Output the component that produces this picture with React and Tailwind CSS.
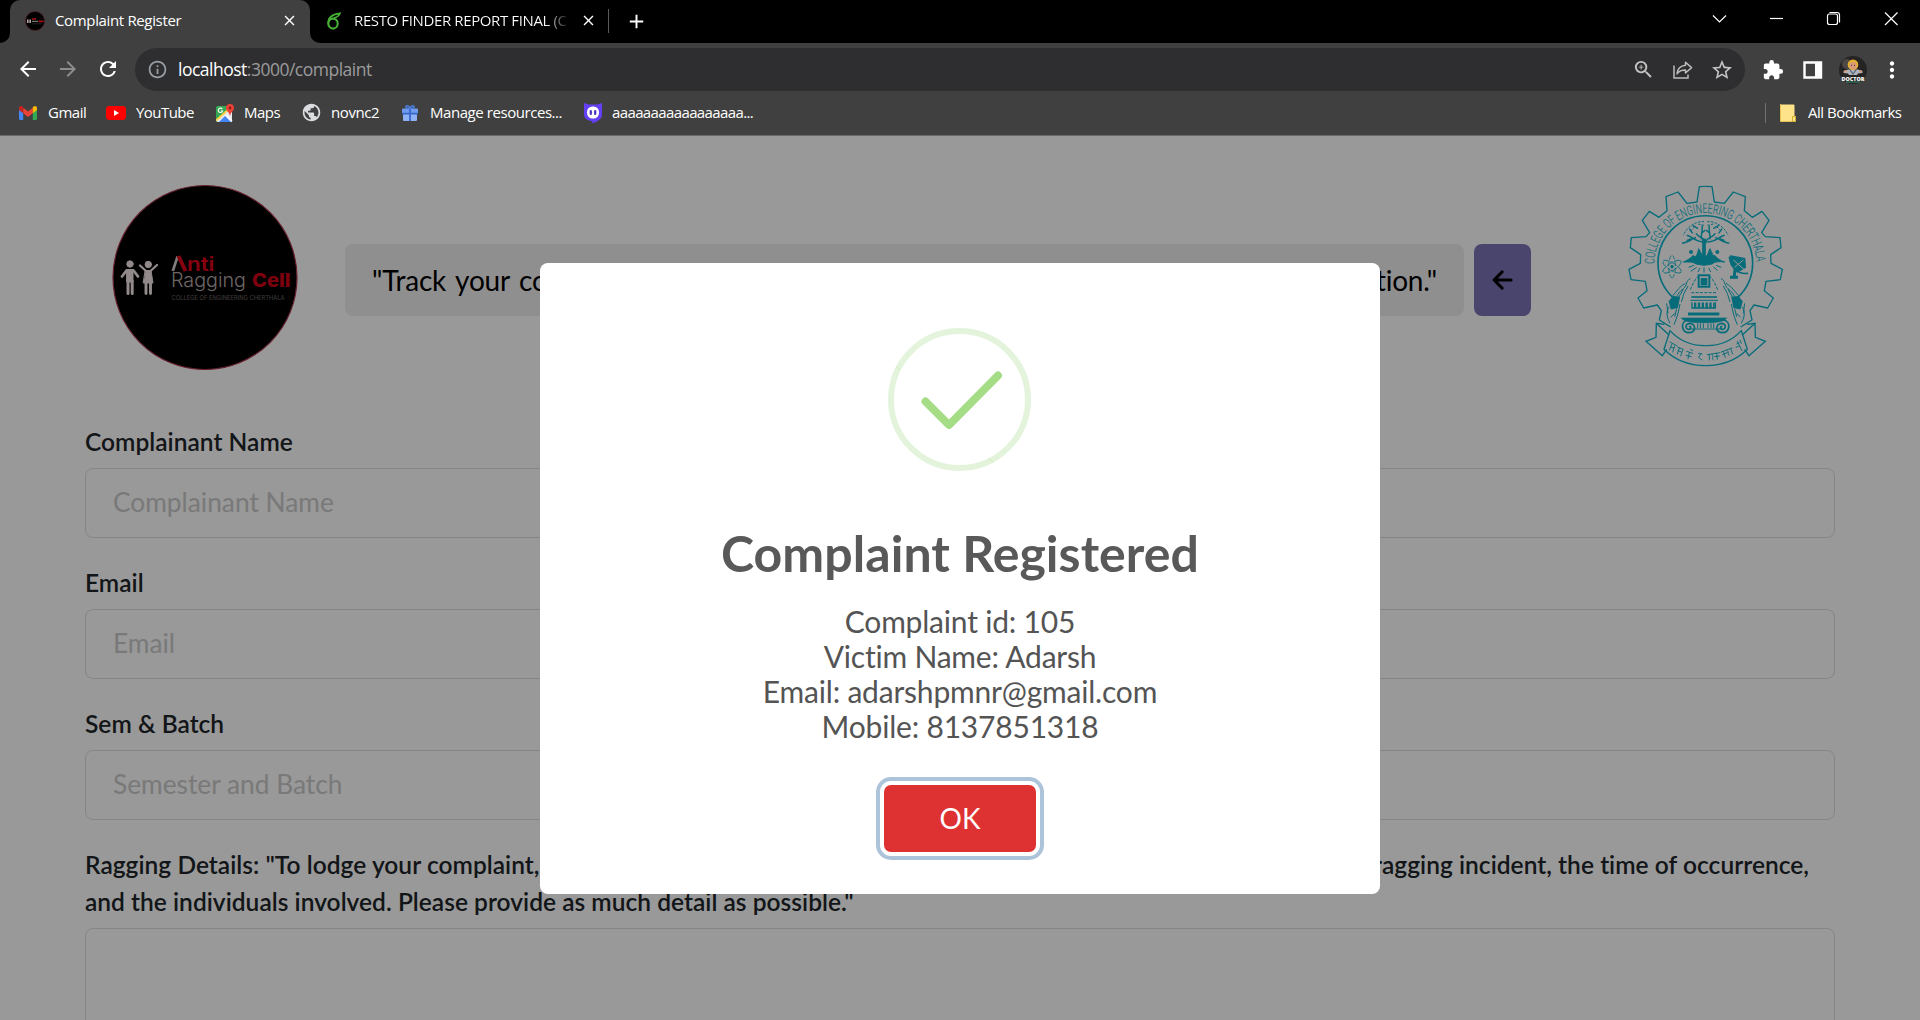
import React from "react";
import {
  MdArrowBack, MdArrowForward, MdRefresh, MdInfoOutline, MdZoomIn, MdStarBorder,
  MdExtension, MdMoreVert, MdPublic, MdClose, MdAdd,
} from "react-icons/md";

/* ---------- browser chrome icons ---------- */

const MiniLogo = () => (
  <svg className="size-5 shrink-0" viewBox="0 0 20 20">
    <circle cx="10" cy="10" r="9.6" fill="#000" stroke="#5a2028" strokeWidth=".7" />
    <path d="M2 8.5h1.6v3.4H2zM4.4 8.5H6v3.4H4.4z" fill="#b5a5a5" />
    <path d="M7 8h4" stroke="#b3121f" strokeWidth="1.4" />
    <path d="M7 10.4h6" stroke="#777" strokeWidth="1.2" />
    <path d="M13.5 10.4h5" stroke="#b3121f" strokeWidth="1.6" />
    <path d="M7 12.8h10" stroke="#333" strokeWidth=".7" />
  </svg>
);

const Overleaf = () => (
  <svg className="w-4 h-[18px] shrink-0" viewBox="0 0 16 18" fill="none" stroke="#46b035" strokeWidth="2.100">
    <ellipse cx="7" cy="11.600" rx="4.700" ry="5" />
    <path d="M2.300 11.500C2 7 4.500 2.500 14 1.300 13 4.300 11 5.300 7.500 6.300" strokeWidth="1.700" />
  </svg>
);

const Gmail = () => (
  <svg className="w-[18px] h-[14px] shrink-0" viewBox="0 0 18 14">
    <path d="M0 2.200V12.700Q0 14 1.300 14H4.200V5.500z" fill="#4285f4" />
    <path d="M18 2.200V12.700Q18 14 16.700 14H13.800V5.500z" fill="#34a853" />
    <path d="M4.200 1.800 9 5.500 13.800 1.800V7.200L9 10.900 4.200 7.200z" fill="#ea4335" />
    <path d="M0 2.200C0 .2 2.100-.6 3.600.8L4.200 1.400V7.200L0 4z" fill="#c5221f" />
    <path d="M18 2.200C18 .2 15.900-.6 14.400.8L13.800 1.400V7.200L18 4z" fill="#fbbc04" />
  </svg>
);

const YouTube = () => (
  <svg className="w-5 h-[14px] shrink-0" viewBox="0 0 20 14">
    <rect width="20" height="14" rx="3.400" fill="#f00" />
    <path d="M8 4v6l5-3z" fill="#fff" />
  </svg>
);

const Maps = () => (
  <svg className="w-[18px] h-[18px] shrink-0" viewBox="0 0 18 18">
    <rect y="2" width="16" height="16" rx="1.500" fill="#34a853" />
    <path d="M0 16.500 14 4l2 2v12H1.500z" fill="#e8eaed" />
    <path d="M3 18 9 12 15 18z" fill="#4285f4" />
    <path d="M0 16.500 14.500 3.500" stroke="#fbd14b" strokeWidth="2" />
    <path d="M10 11 16 17" stroke="#fff" strokeWidth="1.500" />
    <path d="M6.300 5.100A2.200 2.200 0 1 0 6.600 7H4.800" fill="none" stroke="#fff" strokeWidth="1.100" />
    <path d="M14 0a4 4 0 0 1 4 4c0 2.800-3.100 3.800-4 8-.9-4.200-4-5.200-4-8a4 4 0 0 1 4-4z" fill="#ea4335" />
    <circle cx="14" cy="4" r="1.400" fill="#8c1d18" />
  </svg>
);

const Gift = () => (
  <svg className="w-4 h-4 shrink-0" viewBox="0 0 16 16">
    <rect x="0" y="3.500" width="16" height="5" rx="1" fill="#6f9cf0" />
    <rect x="1" y="9" width="14" height="7" rx="1" fill="#8fb2f5" />
    <path d="M8 3.500V16M0 8.700H16" stroke="#3867c8" strokeWidth="1.800" />
    <path d="M8 3.700C6 3.700 3.600 3 4 1.500 4.600-.2 7.400 1 8 3.700 8.600 1 11.400-.2 12 1.500 12.400 3 10 3.700 8 3.700z" fill="none" stroke="#4d7fe0" strokeWidth="1.500" />
  </svg>
);

const PurpleMask = () => (
  <svg className="w-[18px] h-5 shrink-0" viewBox="0 0 18 20">
    <path d="M0 0 5 1.500H13L18 0V12C18 15 16 16 13.500 18 12 19.300 11 20 7.500 20L8.500 18.300C4 17.500 0 15.500 0 12z" fill="#6440f5" />
    <rect x="3" y="3.500" width="12" height="12" rx="5.500" fill="#fff" />
    <rect x="5.700" y="7" width="2.200" height="5" rx="1.100" fill="#4a2fc0" />
    <rect x="10.100" y="7" width="2.200" height="5" rx="1.100" fill="#4a2fc0" />
  </svg>
);

const Folder = () => (
  <svg className="w-4 h-[18px] shrink-0" viewBox="0 0 16 18">
    <path d="M.5.500H13.500Q14.500.500 14.500 1.500V12H16V17.500H.5z" fill="#ffe38b" />
    <path d="M12.500 17.500V12.500H15.500V17.500z" fill="#ffe38b" stroke="#d9b02c" />
    <path d="M.5 0V17.500H12" fill="none" stroke="#e7c34d" />
  </svg>
);

const ShareIcon = () => (
  <svg className="w-5 h-[18px] shrink-0" viewBox="0 0 20 18" fill="none" stroke="#bdbdbd" strokeWidth="1.500">
    <path d="M1 4.500V17H15V13.500" />
    <path d="M12.500 1.200 18.600 6.600 12.500 12V9C8.500 9 6 10 4 12.800 4.500 8 7.500 4.800 12.500 4.300z" strokeLinejoin="round" />
  </svg>
);

const SidePanel = () => (
  <svg className="w-5 h-[18px] shrink-0" viewBox="0 0 20 18">
    <path d="M1.500 1.500H18V16.500H1.500z" fill="none" stroke="#fff" strokeWidth="2.400" />
    <path d="M12 1H18V17H12z" fill="#fff" />
  </svg>
);

const Avatar = () => (
  <svg className="size-7 shrink-0" viewBox="0 0 28 28">
    <circle cx="14" cy="14" r="14" fill="#262423" />
    <circle cx="8" cy="8" r="5" fill="#4d4845" />
    <path d="M4.500 15 9 13.500H19L23.500 15V17L19 17.500 18 19H10L9 17.500 4.500 17z" fill="#aeb4bd" />
    <path d="M11 14 14 18 17 14" fill="none" stroke="#596273" strokeWidth="1.200" />
    <path d="M5 15.500H8M20 15.500H23" stroke="#d89a78" strokeWidth="2" />
    <circle cx="14" cy="8.800" r="5.300" fill="#e5b32d" />
    <circle cx="14" cy="9.800" r="3.700" fill="#d89a78" />
    <path d="M12 9.300h1M15 9.300h1" stroke="#333" />
    <text x="14" y="24.500" textAnchor="middle" fontSize="5.400" fontWeight="800" fontFamily="Open Sans, sans-serif" fill="#fff">DOCTOR</text>
    <path d="M7 26H21" stroke="#3fae86" strokeWidth=".8" />
  </svg>
);

const Bookmark = ({ icon, iconW, width, label, tracking }) => (
  <div className={`flex items-center ${width}`}>
    <div className={`${iconW} shrink-0 flex`}>{icon}</div>
    <span className={`whitespace-nowrap ${tracking}`}>{label}</span>
  </div>
);

function TabStrip() {
  return (
    <div className="h-[43px] bg-black flex items-stretch">
      <div className="w-[10px] bg-[#404040]"><div className="size-full bg-black rounded-br-[10px]" /></div>
      <div className="w-[300px] bg-[#404040] rounded-t-[10px] flex items-center pl-[15px] pr-[12px] pb-[2px]">
        <MiniLogo />
        <span className="ml-[10px] flex-1 whitespace-nowrap tracking-[-0.35px]">Complaint Register</span>
        <MdClose className="size-[17px]" />
      </div>
      <div className="w-[10px] bg-[#404040]"><div className="size-full bg-black rounded-bl-[10px]" /></div>
      <div className="flex items-center pl-[6px] pb-[2px] w-[288px]">
        <Overleaf />
        <span className="ml-3 w-[216px] overflow-hidden whitespace-nowrap tracking-[-0.38px] bg-linear-to-r from-white from-88% to-transparent bg-clip-text text-transparent">RESTO FINDER REPORT FINAL (C</span>
        <MdClose className="ml-2.5 size-[17px]" />
      </div>
      <div className="w-px h-6 mt-[9px] bg-[#5a5a5a]" />
      <MdAdd className="size-[23px] ml-4 mt-[10px]" />
      <div className="ml-auto flex items-start">
        <svg className="w-[201px] h-10" viewBox="0 0 201 40" fill="none" stroke="#fff" strokeWidth="1.200">
          <path d="M9 15.500 15.500 22 22 15.500" />
          <path d="M66 18.500H79" />
          <rect x="123.500" y="14" width="10" height="10.500" rx="2" />
          <path d="M125.500 12.500H133Q135.500 12.500 135.500 15V22.500" />
          <path d="M181 12.500 193.500 25M193.500 12.500 181 25" />
        </svg>
        <div className="w-[15px]" />
      </div>
    </div>
  );
}

function Toolbar() {
  return (
    <div className="h-[53px] pt-[5px] flex items-start">
      <div className="h-[43px] w-[135px] flex items-center pl-4 gap-4">
        <MdArrowBack className="size-6 -mt-px" />
        <MdArrowForward className="size-6 -mt-px text-[#8c8c8c]" />
        <MdRefresh className="size-6 -mt-px" />
      </div>
      <div className="h-[43px] w-[1610px] rounded-full bg-[#2e2e30] flex items-center pl-[12px] pr-[11px]">
        <MdInfoOutline className="size-[21px] text-[#9aa0a6]" />
        <span className="ml-[10px] text-[17.500px] tracking-[-0.5px] text-[#9b9b9b]"><span className="text-white">localhost</span>:3000/complaint</span>
        <div className="ml-auto flex items-center text-[#c4c4c4]">
          <MdZoomIn className="size-[23px]" />
          <div className="ml-[18px]"><ShareIcon /></div>
          <MdStarBorder className="ml-[17px] size-[24px]" />
        </div>
      </div>
      <div className="h-[43px] flex items-center pl-[17px]">
        <MdExtension className="size-[22px]" />
        <div className="ml-[19px]"><SidePanel /></div>
        <div className="ml-4"><Avatar /></div>
        <MdMoreVert className="ml-[12px] size-[26px]" />
      </div>
    </div>
  );
}

function Bookmarks() {
  return (
    <div className="h-[40px] pb-[6px] border-b border-[#6a6a6a] flex items-center pl-[19px] text-[15px]">
      <Bookmark icon={<Gmail />} iconW="w-[29px]" width="w-[87px]" label="Gmail" tracking="tracking-[-0.5px]" />
      <Bookmark icon={<YouTube />} iconW="w-[30px]" width="w-[110px]" label="YouTube" tracking="tracking-[-0.55px]" />
      <Bookmark icon={<Maps />} iconW="w-[28px]" width="w-[85px]" label="Maps" tracking="tracking-[-0.5px]" />
      <Bookmark icon={<MdPublic className="size-[21px] text-[#dadce0]" />} iconW="w-[30px]" width="w-[101px]" label="novnc2" tracking="tracking-[-0.4px]" />
      <Bookmark icon={<Gift />} iconW="w-[28px]" width="w-[182px]" label="Manage resources..." tracking="tracking-[-0.44px]" />
      <Bookmark icon={<PurpleMask />} iconW="w-[28px]" width="w-[200px]" label="aaaaaaaaaaaaaaaaa..." tracking="tracking-[-0.62px]" />
      <div className="ml-auto flex items-center pr-[18px]">
        <div className="w-px h-5 bg-[#707070] mr-[14px]" />
        <Folder />
        <span className="ml-[12px] w-[94px] whitespace-nowrap tracking-[-0.5px]">All Bookmarks</span>
      </div>
    </div>
  );
}

/* ---------- page artwork ---------- */

function CellLogo() {
  return (
    <svg className="size-[186px] shrink-0" viewBox="-1 -1 186 186">
      <circle cx="92" cy="92.500" r="92" fill="#000" stroke="#b03a50" strokeWidth="1.200" />
      <g fill="#f4e6e6" stroke="#f4e6e6" strokeLinecap="round">
        <circle cx="17" cy="79" r="3.200" />
        <path d="M14 84.500H20V97H14z" />
        <path d="M13.500 85.500 9 91.500M20.500 85.500 25 91.500" strokeWidth="2.800" />
        <path d="M15 96V108.500M19.200 96V108.500" strokeWidth="3" />
        <circle cx="35.300" cy="79.500" r="3.200" />
        <path d="M32.500 85.500H38L40 98H30.500z" />
        <path d="M33 86 27 80.500M37.500 86 44 80" strokeWidth="2.300" />
        <path d="M33 98V108.500M37.500 98V108.500" strokeWidth="2.900" />
      </g>
      <path d="M59.800 86 64.600 71.500" stroke="#d8d0d0" strokeWidth="2.600" />
      <path d="M65.500 71 72.500 86" stroke="#e0001c" strokeWidth="4" />
      <g fontFamily="Inter, sans-serif">
        <text x="74" y="86" fontSize="19" fontWeight="600" fill="#e0001c" textLength="27.500" lengthAdjust="spacingAndGlyphs">nti</text>
        <text x="58" y="102" fontSize="20" fontWeight="300" fill="#b5a9a9" textLength="75" lengthAdjust="spacingAndGlyphs">Ragging</text>
        <text x="139" y="102" fontSize="19" fontWeight="800" fill="#d2001a" textLength="38.500" lengthAdjust="spacingAndGlyphs">Cell</text>
        <text x="58.500" y="115" fontSize="6.200" fill="#6f6868" textLength="113" lengthAdjust="spacingAndGlyphs">COLLEGE OF ENGINEERING CHERTHALA</text>
      </g>
    </svg>
  );
}

const gearHalf = [
  [257, 19], [276, 20], [283, 66], [313, 70], [340, 36], [376, 50], [373, 92], [397, 112], [426, 94],
  [447, 121], [425, 158], [436, 170], [480, 173], [483, 203], [452, 224], [453, 250], [487, 268],
  [481, 299], [438, 304], [433, 332], [460, 354], [443, 384], [402, 375], [390, 392], [396, 420], [362, 441],
];

const HalfArt = () => (
  <g fill="none">
    <polyline points={gearHalf.map((p) => p.join(",")).join(" ")} strokeLinejoin="round" />
    {/* praying figure */}
    <path d="M303 296C316 300 312 316 324 326 334 334 342 342 346 356M318 310C334 318 344 334 358 350M324 328 338 352M310 318 322 340 330 366" strokeWidth="3" />
    <path d="M336 352 354 350 366 364 360 386 342 382z" fill="#0cb4cc" />
    <path d="M334 372C338 396 344 416 352 434M366 380C378 396 372 414 364 430M344 386 350 410M374 370 370 400M350 400 362 412" strokeWidth="3" />
    {/* tree crown */}
    <path d="M257 190C257 172 276 176 286 160M262 186C286 186 296 170 314 166M270 178C272 160 264 150 268 136M286 172C296 176 310 188 328 190M296 160 306 146M280 146 296 136M300 176 314 182M258 150 270 160" strokeWidth="4.500" />
    <path d="M262 125C284 122 314 140 324 166M262 136 280 132M290 140 306 156" strokeWidth="3" strokeDasharray="7 4" />
    {/* volute capital */}
    <path d="M257 447H304" strokeWidth="3" />
    <path d="M257 420H312C334 426 330 458 306 458 284 456 286 430 306 430 322 434 316 450 306 448 298 444 302 438 307 440" strokeWidth="5" />
    <path d="M264 430V444M273 430V444M281 430V444" strokeWidth="3" />
    {/* ribbon tails */}
    <path d="M381 433 405 430 406 472 436 484 387 527 374 508" />
    <path d="M405 430 366 466" />
    <path d="M257 557C306 557 350 540 382 508L364 452C336 482 300 498 257 497" />
  </g>
);

function Crest() {
  return (
    <svg className="w-[170px] h-[192px] shrink-0" viewBox="0 0 510 576" fill="none" stroke="#0cb4cc" strokeWidth="4">
      <defs>
        <path id="arc" d="M103 252A153 153 0 0 1 409 252" />
      </defs>
      <HalfArt />
      <g transform="translate(514 0) scale(-1 1)"><HalfArt /></g>
      <path d="M158 352A142 142 0 1 1 354 352" strokeWidth="5" />
      <text fontFamily="Roboto, sans-serif" fontSize="40" fontWeight="300" fill="#0cb4cc" strokeWidth=".4">
        <textPath href="#arc" textLength="474" lengthAdjust="spacingAndGlyphs">COLLEGE OF ENGINEERING CHERTHALA</textPath>
      </text>
      {/* trunk and roots */}
      <path d="M252 176V240" strokeWidth="11" />
      <path d="M190 246C206 240 214 232 220 226 226 236 232 226 236 206 242 216 246 230 257 230 264 226 266 214 270 206 276 218 280 232 284 226 292 236 300 242 314 246 296 244 284 244 276 252L252 256 228 252C218 244 206 246 190 246z" fill="#0cb4cc" strokeWidth="3" />
      <circle cx="213" cy="216" r="6" fill="#0cb4cc" stroke="none" />
      <circle cx="292" cy="216" r="6" fill="#0cb4cc" stroke="none" />
      <path d="M206 262 222 256M212 274 230 262M240 264 234 276M252 262V278M266 264 272 276M280 260 292 272M288 256 304 262" strokeWidth="3" />
      {/* atom */}
      <g strokeWidth="2.400">
        <ellipse cx="156" cy="260" rx="34" ry="10" transform="rotate(90 156 260)" strokeDasharray="14 5" />
        <ellipse cx="156" cy="260" rx="32" ry="11" transform="rotate(32 156 260)" strokeDasharray="20 4" />
        <ellipse cx="156" cy="260" rx="32" ry="11" transform="rotate(-32 156 260)" strokeDasharray="20 4" />
        <circle cx="156" cy="260" r="4" fill="#0cb4cc" />
      </g>
      {/* satellite dish */}
      <path d="M332 228 374 236 376 262 352 276 334 254z" fill="#0cb4cc" />
      <path d="M328 230C332 262 352 284 384 280" strokeWidth="5" />
      <path d="M346 262 342 296M330 292H354" strokeWidth="9" />
      <path d="M340 240 372 268M370 240 344 262" stroke="#fff" strokeWidth="3" />
      {/* lamp and temple steps */}
      <path d="M236 286H268V320H236z" strokeWidth="6" />
      <path d="M244 296H260V314H244z" fill="#0cb4cc" />
      <path d="M236 288C222 300 216 318 210 332M268 288C282 300 288 318 294 332M214 338H290" strokeWidth="3" strokeDasharray="9 4" />
      <path d="M214 351H291" strokeWidth="5" />
      <path d="M211 361H294" strokeWidth="3" />
      <path d="M216 367V384H286V367" strokeWidth="4" />
      <path d="M222 376H284" strokeWidth="17" strokeDasharray="7 4.500" />
      <path d="M204 402H298" strokeWidth="9" />
      <path d="M184 414H320C310 428 280 428 252 428 224 428 194 428 184 414z" fill="#0cb4cc" strokeWidth="2" />
      {/* motto lettering */}
      <g strokeWidth="2.800" strokeLinecap="round">
        <path d="M150 486 172 498M156 492 148 510M164 498 158 516M174 502 190 508M178 504 172 522M188 510 182 528M152 502 162 504M174 512 184 516" />
        <path d="M200 514 218 520M208 518 204 536M198 526 214 530M212 508 218 512" />
        <path d="M236 520 246 522M242 522 236 532 246 540" />
        <path d="M262 524 300 518M268 524V540M276 523C284 530 272 534 280 540M290 520 292 538M284 530 298 528" />
        <path d="M304 516 336 504M310 514 316 532M320 510C330 516 320 522 328 526M332 506 338 522M308 524 322 518" />
        <path d="M350 492 358 488M352 484 366 512M360 480 364 490M348 502 358 498" />
      </g>
    </svg>
  );
}

/* ---------- page ---------- */

const inputClass =
  "block w-full h-[70px] rounded-lg border border-[#dcdee0] bg-white px-[27px] pb-[3px] text-[26.300px] text-[#212529] placeholder:text-[#cacaca] placeholder:opacity-100";

const labelClass = "block text-[24.500px] leading-[37px] font-semibold tracking-[0.03px] text-[#212529]";

const Field = ({ label, placeholder }) => (
  <div className="h-[141px]">
    <div className="h-[45px]">
      <label className={labelClass}>{label}</label>
    </div>
    <input className={inputClass} placeholder={placeholder} readOnly />
  </div>
);

function SuccessDialog() {
  return (
    <div className="w-[840px] h-[631px] rounded-lg bg-white flex flex-col items-center pt-[65px] text-center">
      <svg className="size-[143px] mr-px" viewBox="0 0 143 143" fill="none">
        <circle cx="71.500" cy="71.500" r="68.500" stroke="#e4f4dc" strokeWidth="6" />
        <path d="M8 38 12 42M101 131 105 134" stroke="#cdebbd" />
        <path d="M37.500 73.500 61 97 110 47.500" stroke="#a5dc86" strokeWidth="8" strokeLinecap="round" strokeLinejoin="round" />
      </svg>
      <h2 className="mt-[50px] text-[50px] leading-[64px] font-bold tracking-[0.05px] text-[#595959] whitespace-nowrap">Complaint Registered</h2>
      <div className="mt-[19px] text-[30px] leading-[35px] tracking-[-0.2px] text-[#545454]">
        <p>Complaint id: 105</p>
        <p>Victim Name: Adarsh</p>
        <p>Email: adarshpmnr@gmail.com</p>
        <p>Mobile: 8137851318</p>
      </div>
      <button className="mt-[41px] w-[152px] h-[67px] pb-[2px] rounded-[7px] bg-[#de3232] text-white text-[28px] ring-4 ring-[#adc3da] ring-offset-4 ring-offset-white">OK</button>
    </div>
  );
}

export default function App() {
  return (
    <div className="w-[1920px] h-[1020px] overflow-hidden flex flex-col font-['Open_Sans',sans-serif]">
      <header className="bg-[#404040] text-white text-[15px] shrink-0">
        <TabStrip />
        <Toolbar />
        <Bookmarks />
      </header>
      <main className="relative flex-1 overflow-hidden bg-white font-['Lato',sans-serif] [font-variant-ligatures:none]">
        <div className="flex items-start h-[287px] pl-[112px] pr-[130px] pt-[48px]">
          <CellLogo />
          <div className="ml-[47px] mt-[60px] w-[1119px] h-[72px] rounded-lg bg-[#efefef] px-[27px] text-[28px] leading-[72px] tracking-[-0.2px] text-black whitespace-nowrap [text-align-last:justify]">
            "Track your complaint status easily and stay updated on the progress of its resolution."
          </div>
          <button className="ml-[10px] mt-[60px] w-[57px] h-[72px] rounded-lg bg-[#7a73b6] flex items-center justify-center">
            <svg className="w-[21px] h-5" viewBox="0 0 21 20" fill="none" stroke="#000" strokeWidth="3.200" strokeLinecap="round" strokeLinejoin="round">
              <path d="M19 10H2.500M10 2 2.200 10 10 18" />
            </svg>
          </button>
          <div className="ml-[89px] -mt-1"><Crest /></div>
        </div>
        <form className="pl-[85px] w-[1835px]">
          <Field label="Complainant Name" placeholder="Complainant Name" />
          <Field label="Email" placeholder="Email" />
          <Field label="Sem & Batch" placeholder="Semester and Batch" />
          <label className={labelClass}>
            <span className="block whitespace-nowrap w-[1724px] [text-align-last:justify]">
              Ragging Details: "To lodge your complaint, please kindly provide a comprehensive statement detailing the nature of the ragging incident, the time of occurrence,
            </span>
            <span className="block">and the individuals involved. Please provide as much detail as possible."</span>
          </label>
          <textarea className="mt-[8px] block w-full h-[200px] resize-none rounded-lg border border-[#dcdee0] bg-white" readOnly />
        </form>
        <div className="absolute inset-0 bg-black/40 flex justify-center items-start pt-[127px]">
          <SuccessDialog />
        </div>
      </main>
    </div>
  );
}
